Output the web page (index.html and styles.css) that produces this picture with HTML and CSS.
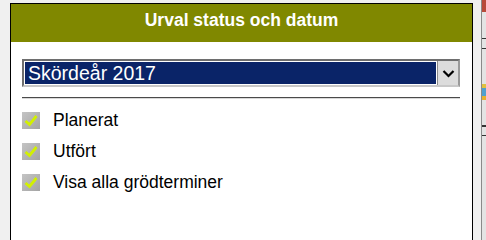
FILE: index.html
```html
<!DOCTYPE html>
<html lang="sv">
<head>
<meta charset="utf-8">
<title>Urval status och datum</title>
<link rel="stylesheet" href="styles.css">
</head>
<body>
<div class="page">
  <section class="panel">
    <header class="panel-head">Urval status och datum</header>
    <div class="panel-body">
      <div class="select" role="combobox" aria-expanded="false">
        <div class="select-value"><span>Skördeår 2017</span></div>
        <div class="select-btn">
          <svg width="13" height="9" viewBox="0 0 13 9" aria-hidden="true"><path d="M1.5 2 L6.5 7 L11.5 2" fill="none" stroke="#000" stroke-width="2.2"/></svg>
        </div>
      </div>
      <div class="rule"></div>
      <ul class="checks">
        <li class="check"><span class="box"><svg width="18" height="17" viewBox="0 0 18 17" aria-hidden="true"><path d="M3.5 9 L7.5 12.5 L14.5 4" fill="none" stroke="#d2f000" stroke-width="2.8"/></svg></span>Planerat</li>
        <li class="check"><span class="box"><svg width="18" height="17" viewBox="0 0 18 17" aria-hidden="true"><path d="M3.5 9 L7.5 12.5 L14.5 4" fill="none" stroke="#d2f000" stroke-width="2.8"/></svg></span>Utfört</li>
        <li class="check"><span class="box"><svg width="18" height="17" viewBox="0 0 18 17" aria-hidden="true"><path d="M3.5 9 L7.5 12.5 L14.5 4" fill="none" stroke="#d2f000" stroke-width="2.8"/></svg></span>Visa alla grödterminer</li>
      </ul>
    </div>
  </section>
  <div class="gap"></div>
  <div class="edge"></div>
</div>
</body>
</html>
```

FILE: styles.css
```css
html, body {
  margin: 0;
  padding: 0;
  background: #f0f0f0;
  height: 100%;
  overflow: hidden;
}
.page {
  display: flex;
  min-height: 100vh;
  padding-left: 10px;
  font-family: "Liberation Sans", Arial, sans-serif;
}
.panel {
  width: 461px;
  margin-top: 3px;
  border: 1px solid #000;
  border-bottom: none;
  background: #fff;
}
.panel-head {
  height: 38px;
  box-sizing: border-box;
  padding-top: 6px;
  background: #808800;
  color: #fff;
  font-weight: bold;
  font-size: 17.5px;
  line-height: 20px;
  text-align: center;
}
.panel-body {
  padding: 17px 12px 0 11px;
}
.select {
  display: flex;
  width: 438px;
  height: 28px;
  box-sizing: border-box;
  border: 2px solid #6e6e6e;
  border-right-color: #9a9a9a;
  border-bottom-color: #c8c8c8;
  background: #fff;
}
.select-value {
  flex: 1;
  margin: 1px;
  background: #0a2468;
  color: #fff;
  font-size: 19.5px;
  line-height: 23px;
  padding-left: 3px;
  overflow: hidden;
}
.select-btn {
  width: 20px;
  display: flex;
  align-items: center;
  justify-content: center;
  background: #dcdcdc;
  border-left: 1px solid #8a8a8a;
}
.rule {
  width: 438px;
  height: 1px;
  margin-top: 10px;
  background: #4a4a4a;
  border-bottom: 1px solid #d8d8d8;
}
.checks {
  list-style: none;
  margin: 6px 0 0;
  padding: 0;
}
.check {
  display: flex;
  align-items: center;
  height: 31px;
  font-size: 17.5px;
  color: #000;
}
.box {
  width: 18px;
  height: 17px;
  margin-right: 13px;
  background: linear-gradient(135deg, #c4c4c4, #a4a4a4);
  display: flex;
}
.gap {
  width: 9px;
}
.edge {
  width: 4px;
  border-left: 1px solid #8a8a8a;
  background:
    linear-gradient(#b84a3a 0 12px, transparent 12px 38px, #333 38px 39px, transparent 39px 48px, #333 48px 49px, transparent 49px 84px, #e0c040 84px 88px, #50a0d0 88px 96px, #e8b030 96px 100px, transparent 100px 125px, #333 125px 127px, transparent 127px 135px, #333 135px 136px, transparent 136px),
    #e4e4e4;
}
```
